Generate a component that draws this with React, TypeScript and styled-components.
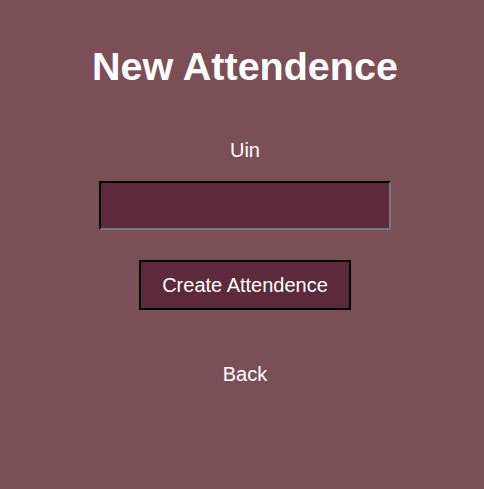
import React from "react";
import styled, { createGlobalStyle } from "styled-components";

const Global = createGlobalStyle`
  html, body {
    margin: 0;
    padding: 0;
    background: #7a4f57;
  }
  body {
    font-family: "Liberation Sans", Arial, sans-serif;
  }
`;

const Page = styled.div`
  min-height: 100vh;
  box-sizing: border-box;
  background: #7a4f57;
  padding: 43px 0 0 6px;
  display: flex;
  flex-direction: column;
  align-items: center;
  color: #ffffff;
`;

const Title = styled.h1`
  margin: 0;
  font-size: 39.5px;
  line-height: 46px;
  font-weight: 700;
  color: #ffffff;
`;

const Label = styled.label`
  margin-top: 50px;
  font-size: 20px;
  line-height: 23px;
  color: #ffffff;
`;

const Input = styled.input`
  margin-top: 19px;
  box-sizing: border-box;
  width: 292px;
  height: 49px;
  background: #5c2a3a;
  border: 2px inset #777777;
  border-top-color: #222222;
  border-left-color: #222222;
  border-bottom-color: #777777;
  border-right-color: #777777;
  color: #ffffff;
  font-size: 20px;
  padding: 0 8px;
  outline: none;
`;

const Button = styled.button`
  margin-top: 30px;
  box-sizing: border-box;
  width: 212px;
  height: 50px;
  background: #5c2a3a;
  border: 2px solid #000000;
  color: #ffffff;
  font-family: "Liberation Sans", Arial, sans-serif;
  font-size: 20px;
  padding: 0;
  cursor: pointer;
`;

const BackLink = styled.a`
  margin-top: 53px;
  font-size: 20px;
  line-height: 23px;
  color: #ffffff;
  text-decoration: none;
`;

export default function App() {
  return (
    <>
      <Global />
      <Page>
        <Title>New Attendence</Title>
        <Label htmlFor="uin">Uin</Label>
        <Input id="uin" type="text" />
        <Button type="button">Create Attendence</Button>
        <BackLink href="#">Back</BackLink>
      </Page>
    </>
  );
}
